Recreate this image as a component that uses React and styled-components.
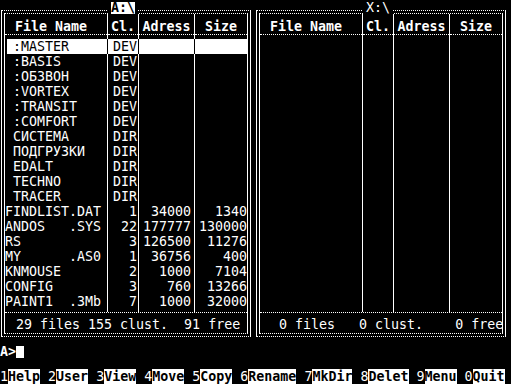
import React from 'react'
import styled, { createGlobalStyle } from 'styled-components'

const GlobalStyle = createGlobalStyle`
  html, body {
    margin: 0;
    padding: 0;
    background: #000;
  }
`

const Screen = styled.div`
  width: 512px;
  height: 384px;
  overflow: hidden;
  background: #000;
  color: #fff;
  font-family: "DejaVu Sans Mono", "Liberation Mono", monospace;
  font-size: 13.3px;
  line-height: 15px;
  display: flex;
  flex-direction: column;
`

const Panels = styled.div`
  display: flex;
  gap: 5px;
  padding: 10px 0 0 1px;
`

const Panel = styled.div`
  position: relative;
  width: 250px;
  box-sizing: border-box;
  border-left: 1px solid #fff;
  border-right: 1px solid #fff;
  border-top: 1px dotted #fff;
  border-bottom: 1px dotted #fff;
  padding: 2px;
`

const Frame = styled.div`
  border-left: 1px solid #fff;
  border-right: 1px solid #fff;
  border-top: 1px dotted #fff;
  border-bottom: 1px dotted #fff;
`

const DriveTab = styled.div`
  position: absolute;
  top: -11px;
  left: 106px;
  height: 14px;
  padding: 0 3px;
  background: #000;
`

const DriveName = styled.span`
  display: inline-block;
  line-height: 12px;
  font-weight: ${p => (p.$active ? 'bold' : 'normal')};
  background: ${p => (p.$active ? '#fff' : '#000')};
  color: ${p => (p.$active ? '#000' : '#fff')};
`

const Columns = styled.div`
  display: flex;
  height: 298px;
  border-bottom: 1px dotted #fff;
`

const Column = styled.div`
  width: ${p => p.$w}px;
  box-sizing: border-box;
  border-right: ${p => (p.$last ? 'none' : '1px solid #fff')};
  display: flex;
  flex-direction: column;
`

const HeadCell = styled.div`
  padding-top: 5px;
  padding-left: ${p => p.$pl || 0}px;
  font-weight: bold;
  text-align: ${p => p.$align || 'center'};
  border-bottom: 1px dotted #fff;
  white-space: pre;
`

const Rows = styled.div`
  padding-top: 4px;
`

const Cell = styled.div`
  height: 15px;
  white-space: pre;
  text-align: ${p => p.$align || 'left'};
  padding-right: ${p => p.$pr || 0}px;
  background: ${p => (p.$sel ? '#fff' : 'transparent')};
  color: ${p => (p.$sel ? '#000' : '#fff')};
  box-shadow: ${p =>
    !p.$sel ? 'none' : p.$first ? 'inset 2px 0 0 #000, 1px 0 0 #000' : p.$last ? 'none' : '1px 0 0 #000'};
`

const Status = styled.div`
  padding: 4px 0 1px 3px;
  white-space: pre;
`

const Prompt = styled.div`
  margin-top: 7px;
  font-weight: bold;
  white-space: pre;
`

const Cursor = styled.span`
  display: inline-block;
  width: 8px;
  height: 12px;
  background: #fff;
  vertical-align: -2px;
`

const Keys = styled.div`
  margin-top: 10px;
  white-space: pre;
`

const KeyLabel = styled.span`
  background: #fff;
  color: #000;
  font-weight: bold;
`

const files = [
  [' :MASTER', 'DEV', '', ''],
  [' :BASIS', 'DEV', '', ''],
  [' :ОБЗВОН', 'DEV', '', ''],
  [' :VORTEX', 'DEV', '', ''],
  [' :TRANSIT', 'DEV', '', ''],
  [' :COMFORT', 'DEV', '', ''],
  [' СИСТЕМА', 'DIR', '', ''],
  [' ПОДГРУЗКИ', 'DIR', '', ''],
  [' EDALT', 'DIR', '', ''],
  [' TECHNO', 'DIR', '', ''],
  [' TRACER', 'DIR', '', ''],
  ['FINDLIST.DAT', '1', '34000', '1340'],
  ['ANDOS   .SYS', '22', '177777', '130000'],
  ['RS', '3', '126500', '11276'],
  ['MY      .AS0', '1', '36756', '400'],
  ['KNMOUSE', '2', '1000', '7104'],
  ['CONFIG', '3', '760', '13266'],
  ['PAINT1  .3Mb', '7', '1000', '32000'],
]

const columns = [
  { title: 'File Name', w: 103, headAlign: 'left', pl: 10, align: 'left', pr: 0 },
  { title: 'Cl.', w: 31, align: 'right', pr: 1 },
  { title: 'Adress', w: 56, align: 'right', pr: 3 },
  { title: 'Size', w: 52, align: 'right', pr: 0, last: true },
]

const keys = [
  ['1', 'Help'],
  ['2', 'User'],
  ['3', 'View'],
  ['4', 'Move'],
  ['5', 'Copy'],
  ['6', 'Rename'],
  ['7', 'MkDir'],
  ['8', 'Delet'],
  ['9', 'Menu'],
  ['0', 'Quit'],
]

function FilePanel({ drive, active, rows, status }) {
  return (
    <Panel>
      <Frame>
        <Columns>
          {columns.map((col, ci) => (
            <Column key={col.title} $w={col.w} $last={col.last}>
              <HeadCell $align={col.headAlign} $pl={col.pl}>{col.title}</HeadCell>
              <Rows>
                {rows.map((r, ri) => (
                  <Cell
                    key={ri}
                    $align={col.align}
                    $pr={col.pr}
                    $sel={active && ri === 0}
                    $first={ci === 0}
                    $last={col.last}
                  >
                    {r[ci]}
                  </Cell>
                ))}
              </Rows>
            </Column>
          ))}
        </Columns>
        <Status>{status}</Status>
      </Frame>
      <DriveTab>
        <DriveName $active={active}>{drive}</DriveName>
      </DriveTab>
    </Panel>
  )
}

export default function App() {
  return (
    <Screen>
      <GlobalStyle />
      <Panels>
        <FilePanel drive="A:\" active rows={files} status=" 29 files 155 clust.  91 free" />
        <FilePanel drive="X:\" rows={[]} status="  0 files   0 clust.    0 free" />
      </Panels>
      <Prompt>
        A&gt;<Cursor />
      </Prompt>
      <Keys>
        {keys.map(([n, label], i) => (
          <React.Fragment key={n}>
            {n}
            <KeyLabel>{label}</KeyLabel>
            {i < keys.length - 1 ? ' ' : ''}
          </React.Fragment>
        ))}
      </Keys>
    </Screen>
  )
}
